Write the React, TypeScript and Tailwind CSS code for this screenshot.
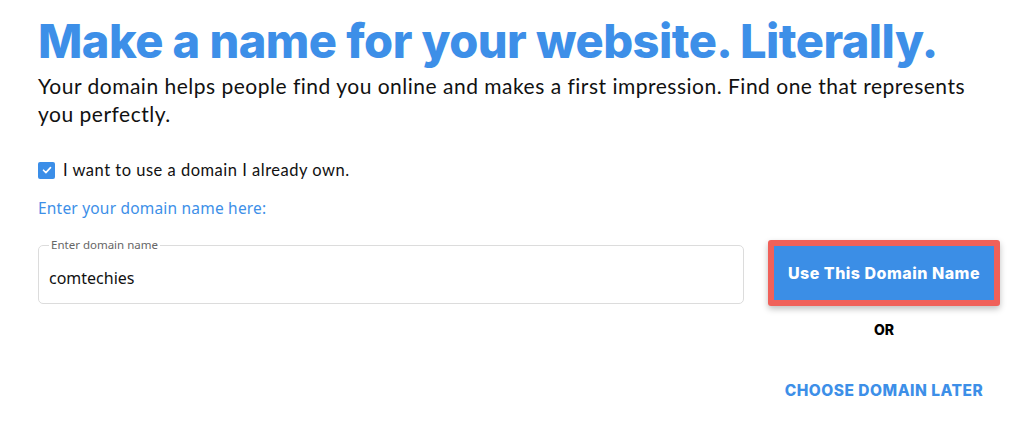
export default function App() {
  return (
    <div className="min-h-[437px] w-[1020px] bg-white pl-[38px] pr-[20px] pt-[16px]">
      <h1 className="font-['Inter',sans-serif] text-[47px] font-extrabold leading-[50px] tracking-[-0.55px] text-[#3d8fe8]">
        Make a name for your website. Literally.
      </h1>
      <p className="mt-[6px] w-[940px] font-['Lato',sans-serif] text-[21px] leading-[28px] tracking-[0.5px] text-[#111]">
        Your domain helps people find you online and makes a first impression. Find one that represents you perfectly.
      </p>

      <label className="mt-[30px] flex items-center gap-[8px] font-['Lato',sans-serif] text-[16.5px] tracking-[0.5px] text-[#111]">
        <span className="flex h-[17px] w-[17px] items-center justify-center rounded-[2px] bg-[#3b8ee8]">
          <svg width="12" height="12" viewBox="0 0 12 12" fill="none">
            <path d="M2.5 6.2l2.4 2.4 4.6-5" stroke="white" strokeWidth="1.6" strokeLinecap="round" strokeLinejoin="round" />
          </svg>
        </span>
        I want to use a domain I already own.
      </label>

      <div className="mt-[14px] font-['Noto_Sans',sans-serif] text-[15.5px] tracking-[0.2px] text-[#3d8fe8]">Enter your domain name here:</div>

      <div className="mt-[19px] flex items-start gap-[24px]">
        <fieldset className="h-[65px] w-[707px] rounded-[5px] border border-[#dcdcdc] px-[10px]">
          <legend className="px-[2px] font-['Noto_Sans',sans-serif] text-[11.5px] leading-[12px] text-[#666]">Enter domain name</legend>
          <div className="pt-[15px] font-['Noto_Sans',sans-serif] text-[16px] text-[#111]">comtechies</div>
        </fieldset>

        <div className="flex w-[232px] flex-col items-center">
          <div className="mt-[1px] rounded-[3px] bg-[#f0615a] p-[6px] shadow-[0_3px_6px_rgba(0,0,0,0.25)]">
            <button className="flex h-[54px] w-[220px] items-center justify-center bg-[#3b8ee6] font-['Inter',sans-serif] text-[16px] font-extrabold tracking-[0.5px] text-white">
              Use This Domain Name
            </button>
          </div>
          <div className="mt-[13px] font-['Inter',sans-serif] text-[14px] font-extrabold text-black">OR</div>
          <div className="mt-[39px] font-['Inter',sans-serif] text-[15.5px] font-extrabold tracking-[0.5px] text-[#3d8fe8]">CHOOSE DOMAIN LATER</div>
        </div>
      </div>
    </div>
  );
}
